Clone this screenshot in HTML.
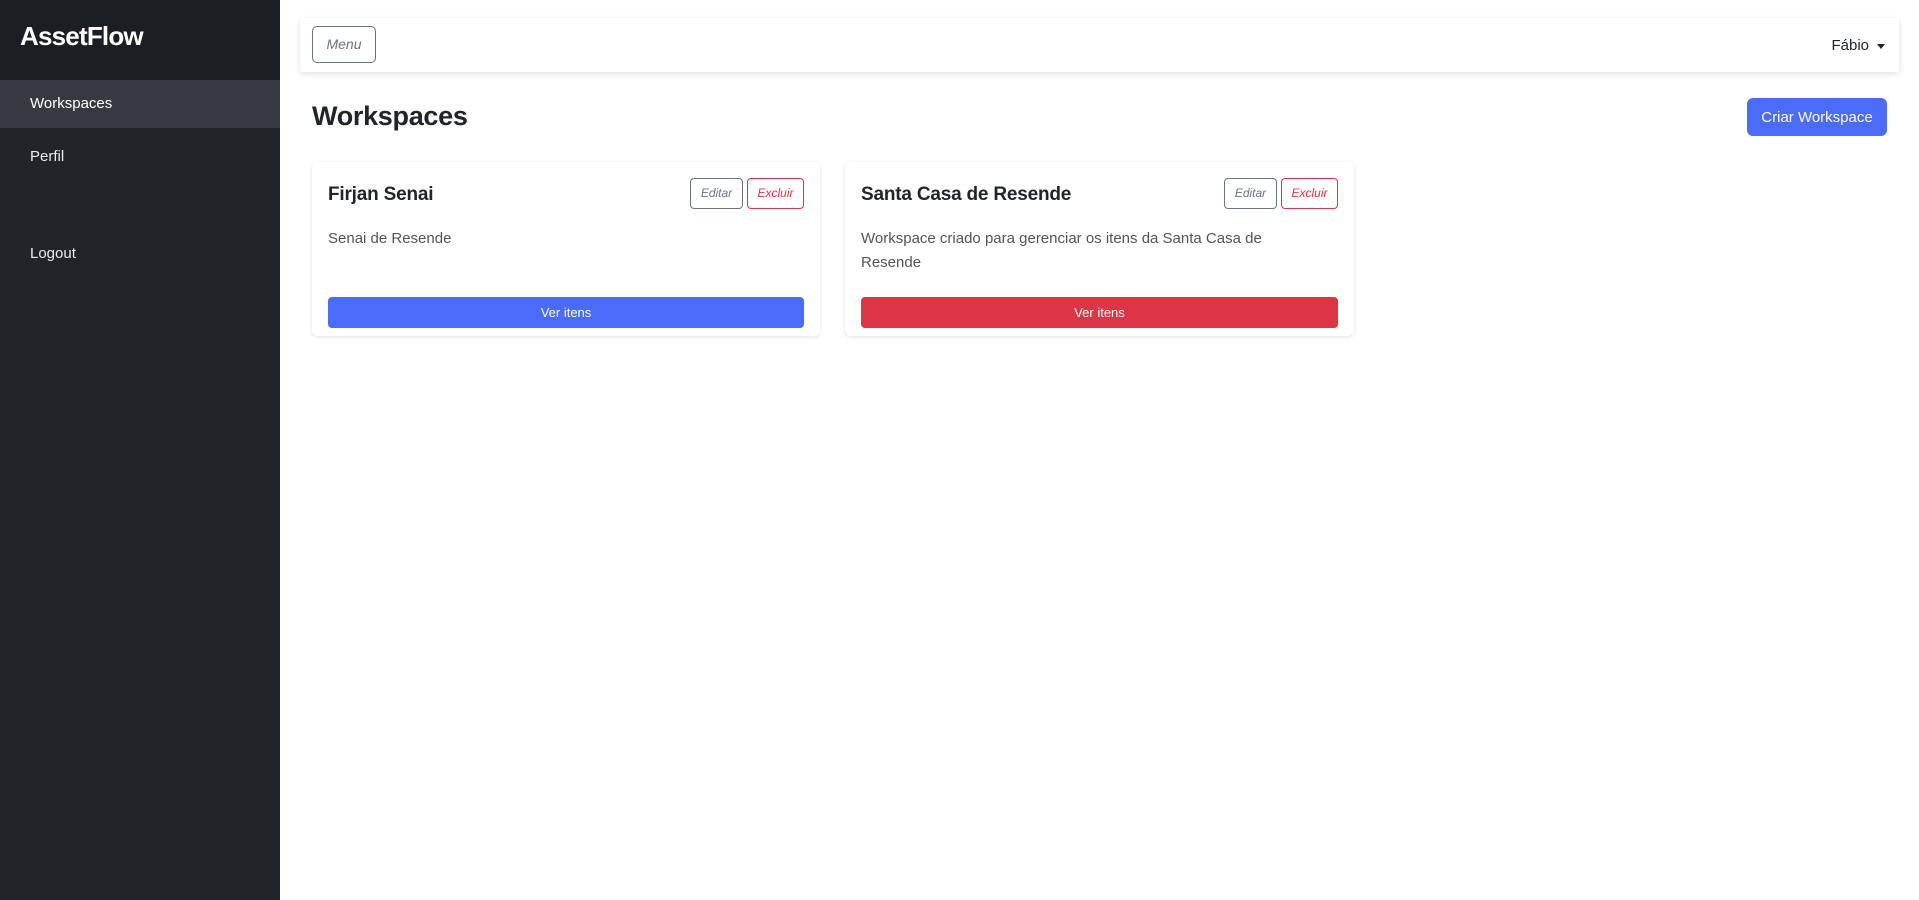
<!DOCTYPE html>
<html><head><meta charset="utf-8"><style>
*{box-sizing:border-box;margin:0;padding:0}
body{width:1919px;height:900px;overflow:hidden;font-family:"Liberation Sans",sans-serif;background:#fff;position:relative;color:#212529}
.sb{position:absolute;left:0;top:0;width:280px;height:900px;background:#212529}
.sbtop{position:absolute;left:0;top:0;width:280px;height:80px;background:#1b1e22}
.brand{position:absolute;left:20px;top:21px;font-size:26px;font-weight:bold;color:#fff;letter-spacing:-0.8px}
.nav{position:absolute;left:0;width:280px;height:48px;color:#e9ecef;font-size:15px;padding-left:30px;line-height:48px}
.act{background:#373a40;color:#fff}
.top{position:absolute;left:300px;top:18px;width:1599px;height:54px;background:#fff;box-shadow:0 2px 6px rgba(0,0,0,.12)}
.menu{position:absolute;left:12px;top:8px;width:64px;height:37px;border:1px solid #6c757d;border-radius:5px;color:#6c757d;font-style:italic;font-size:14px;text-align:center;line-height:35px}
.user{position:absolute;right:14px;top:1px;line-height:54px;font-size:15px}
.user:after{content:"";display:inline-block;margin-left:8px;border-left:4px solid transparent;border-right:4px solid transparent;border-top:5px solid #212529;vertical-align:middle}
h1{position:absolute;left:312px;top:98px;font-size:27px;font-weight:bold;line-height:36px;letter-spacing:-0.3px}
.criar{position:absolute;left:1747px;top:98px;width:140px;height:38px;background:#4b6bfb;color:#fff;border-radius:6px;font-size:15px;text-align:center;line-height:40px}
.card{position:absolute;top:162px;height:174px;background:#fff;border-radius:6px;box-shadow:0 1px 4px rgba(0,0,0,.12)}
.t{position:absolute;left:16px;top:21px;font-size:19px;font-weight:bold;line-height:24px;letter-spacing:-0.2px}
.d{position:absolute;left:16px;top:65px;font-size:15px;color:#555;line-height:24px;width:440px}
.b{position:absolute;top:16px;height:31px;border:1px solid;border-radius:4px;font-style:italic;font-size:12px;text-align:center;line-height:29px}
.ed{border-color:#6c757d;color:#6c757d;width:53px}
.ex{border-color:#dc3545;color:#dc3545;width:57px}
.v{position:absolute;left:16px;right:16px;top:135px;height:31px;border-radius:4px;color:#fff;font-size:13px;text-align:center;line-height:32px}
</style></head><body>
<div class="sb"><div class="sbtop"></div><div class="brand">AssetFlow</div>
<div class="nav act" style="top:80px">Workspaces</div>
<div class="nav" style="top:133px">Perfil</div>
<div class="nav" style="top:230px">Logout</div></div>
<div class="top"><div class="menu">Menu</div><div class="user">Fábio</div></div>
<h1>Workspaces</h1>
<div class="criar">Criar Workspace</div>
<div class="card" style="left:312px;width:508px">
<div class="t">Firjan Senai</div>
<div class="b ed" style="left:378px">Editar</div><div class="b ex" style="left:435px">Excluir</div>
<div class="d">Senai de Resende</div>
<div class="v" style="background:#4b6bfb">Ver itens</div></div>
<div class="card" style="left:845px;width:509px">
<div class="t">Santa Casa de Resende</div>
<div class="b ed" style="left:379px">Editar</div><div class="b ex" style="left:436px">Excluir</div>
<div class="d">Workspace criado para gerenciar os itens da Santa Casa de Resende</div>
<div class="v" style="background:#dc3545">Ver itens</div></div>
</body></html>
